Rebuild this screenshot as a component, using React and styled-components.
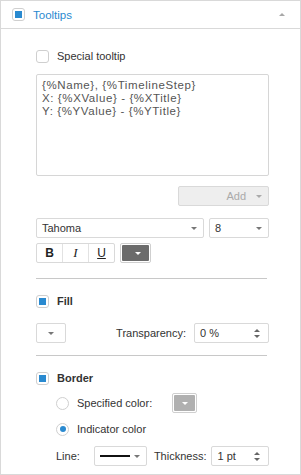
import styled, { createGlobalStyle } from "styled-components";

const GlobalStyle = createGlobalStyle`
  html, body {
    margin: 0;
    padding: 0;
    background: #fff;
    font-family: "Liberation Sans", Arial, sans-serif;
    font-size: 11px;
    color: #333;
  }
`;

const Panel = styled.div`
  width: 301px;
  height: 475px;
  box-sizing: border-box;
  border: 1px solid #d9d9d9;
  display: flex;
  flex-direction: column;
`;

const Header = styled.div`
  height: 28px;
  box-sizing: border-box;
  border-bottom: 1px solid #d9d9d9;
  display: flex;
  align-items: center;
  padding: 0 0 0 11px;
  gap: 8px;
`;

const Title = styled.span`
  color: #2a8ad0;
  font-size: 11.5px;
  flex: 1;
`;

const Collapse = styled.span`
  width: 0;
  height: 0;
  border-left: 3px solid transparent;
  border-right: 3px solid transparent;
  border-bottom: 3px solid #a8a8a8;
  margin-right: 15px;
  margin-top: -1px;
`;

const Body = styled.div`
  display: flex;
  flex-direction: column;
  padding: 17px 31px 0 35px;
`;

const Row = styled.div`
  display: flex;
  align-items: center;
  height: 20px;
  gap: ${(p) => p.$gap || 0}px;
  justify-content: ${(p) => p.$justify || "flex-start"};
  margin-top: ${(p) => p.$mt || 0}px;
  padding-left: ${(p) => p.$indent || 0}px;
`;

const Box = styled.span`
  width: 13px;
  height: 13px;
  box-sizing: border-box;
  border: 1px solid #cfcfcf;
  border-radius: 3px;
  background: #fff;
  display: flex;
  align-items: center;
  justify-content: center;
  flex-shrink: 0;
  &::after {
    content: "";
    display: ${(p) => (p.$checked ? "block" : "none")};
    width: 7px;
    height: 7px;
    background: #2a8ad0;
  }
`;

const Radio = styled(Box)`
  border-radius: 50%;
  &::after {
    border-radius: 50%;
    width: 6px;
    height: 6px;
  }
`;

const Label = styled.span`
  color: ${(p) => (p.$muted ? "#aaa" : "#333")};
  font-weight: ${(p) => (p.$bold ? "bold" : "normal")};
  white-space: nowrap;
`;

const TextArea = styled.div`
  margin-top: 8px;
  height: 102px;
  box-sizing: border-box;
  border: 1px solid #d6d6d6;
  border-radius: 2px;
  padding: 4px 5px;
  line-height: 13px;
  font-size: 11.5px;
  letter-spacing: 0.6px;
  color: #555;
`;

const Field = styled.div`
  height: 20px;
  width: ${(p) => p.$w}px;
  box-sizing: border-box;
  border: 1px solid #d9d9d9;
  border-radius: 2px;
  background: ${(p) => p.$bg || "#fff"};
  display: flex;
  align-items: center;
  padding: 0 6px 0 5px;
  gap: 4px;
  color: ${(p) => p.$color || "#333"};
`;

const FieldText = styled.span`
  flex: 1;
  text-align: ${(p) => p.$align || "left"};
  white-space: nowrap;
`;

const Caret = styled.span`
  width: 0;
  height: 0;
  border-left: 3px solid transparent;
  border-right: 3px solid transparent;
  border-top: 3px solid ${(p) => p.$color || "#777"};
  margin: 0 auto;
  flex-shrink: 0;
`;

const CaretRight = styled(Caret)`
  margin: 0 0 0 auto;
`;

const Spin = styled.span`
  display: flex;
  flex-direction: column;
  gap: 3px;
  margin-right: 2px;
  &::before,
  &::after {
    content: "";
    width: 0;
    height: 0;
    border-left: 3px solid transparent;
    border-right: 3px solid transparent;
  }
  &::before {
    border-bottom: 3px solid #666;
  }
  &::after {
    border-top: 3px solid #666;
  }
`;

const Group = styled.div`
  display: flex;
  border: 1px solid #d9d9d9;
  border-radius: 2px;
  height: 20px;
  box-sizing: border-box;
`;

const StyleBtn = styled.span`
  width: 25px;
  display: flex;
  align-items: center;
  justify-content: center;
  font-family: ${(p) => (p.$i ? '"Liberation Serif", serif' : '"Liberation Sans", Arial, sans-serif')};
  font-size: ${(p) => (p.$i ? 13 : 12)}px;
  color: #222;
  font-weight: ${(p) => (p.$b ? "bold" : "normal")};
  font-style: ${(p) => (p.$i ? "italic" : "normal")};
  text-decoration: ${(p) => (p.$u ? "underline" : "none")};
  & + & {
    border-left: 1px solid #e2e2e2;
  }
`;

const Swatch = styled.div`
  width: ${(p) => p.$w}px;
  height: ${(p) => p.$h}px;
  box-sizing: border-box;
  border: 1px solid #cfcfcf;
  border-radius: 2px;
  padding: 1px;
  display: flex;
  margin-left: ${(p) => p.$ml || 0}px;
`;

const SwatchFill = styled.div`
  flex: 1;
  background: ${(p) => p.$color};
  border-radius: 1px;
  display: flex;
  align-items: center;
  justify-content: ${(p) => (p.$end ? "flex-end" : "center")};
  padding-right: ${(p) => (p.$end ? 8 : 0)}px;
`;

const Divider = styled.hr`
  border: 0;
  border-top: 1px solid #c8c8c8;
  margin: ${(p) => p.$mt}px 2px 0 0;
`;

const LineSample = styled.span`
  width: 30px;
  height: 2px;
  background: #111;
  flex-shrink: 0;
`;

export default function App() {
  return (
    <>
      <GlobalStyle />
      <Panel>
        <Header>
          <Box $checked />
          <Title>Tooltips</Title>
          <Collapse />
        </Header>
        <Body>
          <Row $gap={8}>
            <Box />
            <Label>Special tooltip</Label>
          </Row>
          <TextArea>
            {"{%Name}, {%TimelineStep}"}
            <br />
            {"X: {%XValue} - {%XTitle}"}
            <br />
            {"Y: {%YValue} - {%YTitle}"}
          </TextArea>
          <Row $justify="flex-end" $mt={10}>
            <Field $w={91} $bg="#eeeeee" $color="#aaa">
              <FieldText $align="right">Add</FieldText>
              <Caret $color="#aaa" style={{ margin: "0 0 0 6px" }} />
            </Field>
          </Row>
          <Row $mt={12} $justify="space-between">
            <Field $w={168}>
              <FieldText>Tahoma</FieldText>
              <CaretRight />
            </Field>
            <Field $w={60}>
              <FieldText>8</FieldText>
              <CaretRight />
            </Field>
          </Row>
          <Row $mt={5} $gap={5}>
            <Group>
              <StyleBtn $b>B</StyleBtn>
              <StyleBtn $i>I</StyleBtn>
              <StyleBtn $u>U</StyleBtn>
            </Group>
            <Swatch $w={31} $h={20}>
              <SwatchFill $color="#6b6b6b" $end>
                <Caret $color="#fff" style={{ margin: 0 }} />
              </SwatchFill>
            </Swatch>
          </Row>
          <Divider $mt={15} />
          <Row $mt={12} $gap={8}>
            <Box $checked />
            <Label $bold>Fill</Label>
          </Row>
          <Row $mt={12} $justify="space-between">
            <Field $w={30}>
              <Caret />
            </Field>
            <Row $gap={8}>
              <Label>Transparency:</Label>
              <Field $w={75}>
                <FieldText>0 %</FieldText>
                <Spin />
              </Field>
            </Row>
          </Row>
          <Divider $mt={12} />
          <Row $mt={12} $gap={8}>
            <Box $checked />
            <Label $bold>Border</Label>
          </Row>
          <Row $mt={5} $gap={8} $indent={20}>
            <Radio />
            <Label>Specified color:</Label>
            <Swatch $w={25} $h={20} $ml={12}>
              <SwatchFill $color="#b0b0b0">
                <Caret $color="#fff" />
              </SwatchFill>
            </Swatch>
          </Row>
          <Row $mt={6} $gap={8} $indent={20}>
            <Radio $checked />
            <Label>Indicator color</Label>
          </Row>
          <Row $mt={7} $indent={20}>
            <Label style={{ width: 40 }}>Line:</Label>
            <Field $w={55}>
              <LineSample />
              <CaretRight />
            </Field>
            <Label style={{ marginLeft: 7, marginRight: 5 }}>Thickness:</Label>
            <Field $w={60}>
              <FieldText>1 pt</FieldText>
              <Spin />
            </Field>
          </Row>
        </Body>
      </Panel>
    </>
  );
}
